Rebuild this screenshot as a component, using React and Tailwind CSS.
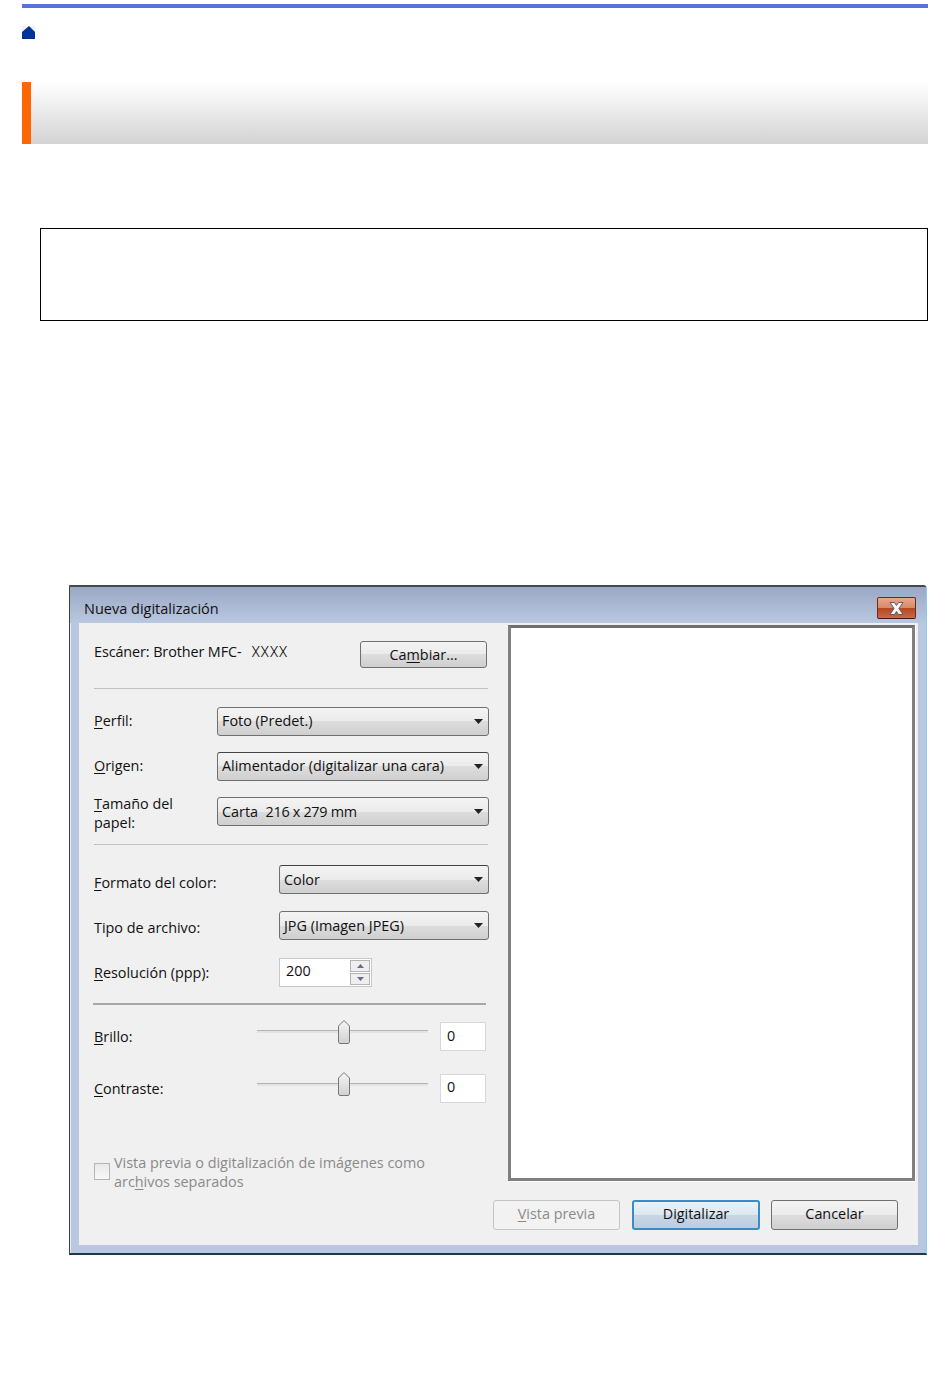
import React from "react";

const U = ({ children }) => <span className="underline underline-offset-2 decoration-1">{children}</span>;

const GRAY_BTN = "border-[#707070] bg-[linear-gradient(#f4f4f4_0%,#ebebeb_50%,#dddddd_50%,#cfcfcf_100%)] text-[#111]";

function Select({ value, className, textClass }) {
  return (
    <div className={`flex h-[29px] items-center justify-between rounded-[3px] border border-[#707070] bg-[linear-gradient(#f4f4f4_0%,#ebebeb_50%,#dddddd_50%,#cfcfcf_100%)] pl-1 pr-[5px] ${className}`}>
      <span className={`whitespace-pre text-[#111] ${textClass}`}>{value}</span>
      <svg width="9" height="5" viewBox="0 0 9 5"><path d="M0 0h9L4.500 5z" fill="#222" /></svg>
    </div>
  );
}

function Button({ children, className }) {
  return (
    <div className={`flex items-center justify-center rounded-[3px] border pb-1 ${className}`}>
      {children}
    </div>
  );
}

function NumInput({ className }) {
  return (
    <div className={`ml-3 flex h-[29px] w-[46px] items-center border border-[#d8d8d8] bg-white pl-[6px] text-[#111] ${className}`}>0</div>
  );
}

function Slider({ trackClass }) {
  return (
    <div className="relative ml-[163px] h-[29px] w-[171px]">
      <div className={`h-[3px] border-t border-[#b4b4b4] bg-[#e4e4e4] ${trackClass}`} />
      <svg className="absolute left-[81px] top-[-2px]" width="12" height="24" viewBox="0 0 12 24">
        <defs>
          <linearGradient id="thumb" x1="0" y1="0" x2="0" y2="1">
            <stop offset="0" stopColor="#f6f6f6" />
            <stop offset="1" stopColor="#d0d0d0" />
          </linearGradient>
        </defs>
        <path d="M6 .5L11.500 6v16l-1 1.500h-9L.5 22V6z" fill="url(#thumb)" stroke="#777" />
      </svg>
    </div>
  );
}

function Row({ label, labelClass, children, className }) {
  return (
    <div className={`flex h-[29px] items-center ${className}`}>
      <div className={`text-[#111] ${labelClass}`}>{label}</div>
      {children}
    </div>
  );
}

export default function App() {
  return (
    <div className="h-[1387px] w-[950px] bg-white pl-[22px] pt-1 font-['Open_Sans',sans-serif] text-[14.4px] leading-[19px]">
      {/* top rule + home */}
      <div className="h-1 w-[906px] bg-[#5b70db]" />
      <svg className="mt-[18px] block" width="13" height="13" viewBox="0 0 13 13">
        <rect width="13" height="6" fill="#f3f3f3" />
        <path d="M7 0l6 6v7H0V6z" fill="#003399" />
      </svg>

      {/* heading band */}
      <div className="mt-[43px] flex h-[62px] w-[906px]">
        <div className="w-[9px] bg-[#ff6600]" />
        <div className="flex-1 bg-[linear-gradient(#ffffff,#d3d3d3)]" />
      </div>

      {/* empty note box */}
      <div className="ml-[18px] mt-[84px] h-[93px] w-[888px] border border-black" />

      {/* scanner dialog */}
      <div className="ml-[47px] mt-[264px] h-[670px] w-[858px] rounded-tr-[4px] border-b-2 border-l border-r border-t-2 border-b-[#1c3a4e] border-l-[#404040] border-r-[#7fd0f0] border-t-[#484848] bg-[#b9c7e0] shadow-[inset_1px_0_0_#e4eaf4]">
        <div className="flex h-[36px] items-center justify-between bg-[linear-gradient(#9aa8c4,#b9c7e0)] pl-[14px] pr-[10px]">
          <span className="mt-[7px] text-[14.5px] text-[#111]">Nueva digitalización</span>
          <div className="mt-[6px] flex h-[22px] w-[39px] items-center justify-center rounded-[2px] border border-[#6b2a22] border-b-[#4a1410] bg-[linear-gradient(#e8a78c_0%,#d98a68_48%,#b8471f_52%,#c8694a_100%)]">
            <svg width="15" height="13" viewBox="0 0 15 13">
              <path d="M1 .5h4.500L7.500 3.500 9.500.5H14L10 6.500 14 12.500H9.500L7.500 9.500 5.500 12.500H1L5 6.500z" fill="#f6f6f6" stroke="#5c5c6a" strokeWidth="1" />
            </svg>
          </div>
        </div>

        <div className="ml-[9px] mr-[8px] h-[622px] bg-[#f0f0f0]">
          <div className="flex h-[569px]">
            {/* form column */}
            <div className="w-[429px] pl-[15px]">
              <div className="box-content flex h-[27px] w-[393px] items-center justify-between pt-[18px]">
                <div className="mb-[6px] flex items-center text-[#111]">
                  <span className="tracking-[-0.1px]">Escáner: Brother MFC-</span>
                  <span className="ml-[10px] mt-[1px] font-['Roboto',sans-serif] text-[14px] font-light tracking-[0.5px] text-black">XXXX</span>
                </div>
                <Button className={`!pb-0 h-[27px] w-[127px] ${GRAY_BTN}`}>
                  <span>Ca<U>m</U>biar...</span>
                </Button>
              </div>
              <div className="mt-5 h-px w-[394px] bg-[#c0c0c0]" />

              <Row className="mt-[18px]" labelClass="mb-[2px] w-[123px]" label={<><U>P</U>erfil:</>}>
                <Select value="Foto (Predet.)" className="w-[272px]" textClass="mb-[2px]" />
              </Row>
              <Row className="mt-4" labelClass="mb-[2px] w-[123px]" label={<><U>O</U>rigen:</>}>
                <Select value="Alimentador (digitalizar una cara)" className="w-[272px] border-t-[#444]" textClass="mb-[2px]" />
              </Row>
              <Row className="mt-4" labelClass="mt-[2px] w-[123px]" label={<><U>T</U>amaño del<br />papel:</>}>
                <Select value={<>Carta  <span className="tracking-[-0.3px]">216 x 279 mm</span></>} className="w-[272px]" />
              </Row>
              <div className="mt-[18px] h-px w-[394px] bg-[#c0c0c0]" />

              <Row className="mt-5" labelClass="mt-[6px] w-[185px]" label={<><U>F</U>ormato del color:</>}>
                <Select value="Color" className="w-[210px] border-t-[#444]" />
              </Row>
              <Row className="mt-[17px]" labelClass="mt-1 w-[185px]" label="Tipo de archivo:">
                <Select value="JPG (Imagen JPEG)" className="w-[210px]" />
              </Row>
              <Row className="mt-[18px]" labelClass="w-[185px]" label={<><U>R</U>esolución (ppp):</>}>
                <div className="flex h-[29px] w-[93px] items-center justify-between border border-[#c8c8c8] bg-white pl-[6px] pr-[1px]">
                  <span className="mb-1 text-[#111]">200</span>
                  <div className="flex flex-col gap-px">
                    <div className="flex h-3 w-[20px] items-center justify-center border border-[#b4b4b4] bg-[#eeeeee]">
                      <svg width="7" height="4" viewBox="0 0 7 4"><path d="M3.500 0L7 4H0z" fill="#6a6a8a" /></svg>
                    </div>
                    <div className="flex h-3 w-[20px] items-center justify-center border border-[#b4b4b4] bg-[#eeeeee]">
                      <svg width="7" height="4" viewBox="0 0 7 4"><path d="M0 0h7L3.500 4z" fill="#6a6a8a" /></svg>
                    </div>
                  </div>
                </div>
              </Row>
              <div className="ml-[-1px] mt-4 h-0.5 w-[393px] bg-[#a6a6a6]" />

              <div className="relative mt-[17px] flex h-[29px] w-[392px] items-center">
                <div className="absolute left-0 top-[5px] text-[#111]"><U>B</U>rillo:</div>
                <Slider trackClass="mt-2" />
                <NumInput className="pb-[2px]" />
              </div>
              <div className="relative mt-[23px] flex h-[29px] w-[392px] items-center">
                <div className="absolute left-0 top-[5px] text-[#111]"><U>C</U>ontraste:</div>
                <Slider trackClass="mt-[9px]" />
                <NumInput className="pb-1" />
              </div>

              <div className="mt-[50px] flex text-[#8a8a8a]">
                <div className="mt-[10px] h-[17px] w-4 border border-[#b4b4b4] bg-[linear-gradient(#e8e8e8,#f8f8f8)]" />
                <div className="ml-1 w-[330px]">
                  Vista previa o digitalización de imágenes como arc<U>h</U>ivos separados
                </div>
              </div>
            </div>

            {/* preview pane */}
            <div className="mt-[2px] h-[556px] w-[407px] border-[3px] border-[#808080] border-t-[#6e6e6e] bg-white shadow-[1px_1px_0_#ffffff]" />
          </div>

          {/* dialog buttons */}
          <div className="mt-2 flex h-[30px] justify-end pr-5">
            <Button className="w-[127px] border-[#c4c4c4] bg-[#f2f2f2] text-[#8a8a8a]">
              <span><U>V</U>ista previa</span>
            </Button>
            <Button className="ml-3 w-[128px] border-2 border-[#3a8cc8] bg-[linear-gradient(#eaf2f8_0%,#dde7f0_50%,#c8d6e4_50%,#bccde0_100%)] text-[#111]">
              Digitalizar
            </Button>
            <Button className={`ml-[11px] w-[127px] ${GRAY_BTN}`}>
              Cancelar
            </Button>
          </div>
        </div>
      </div>
    </div>
  );
}
